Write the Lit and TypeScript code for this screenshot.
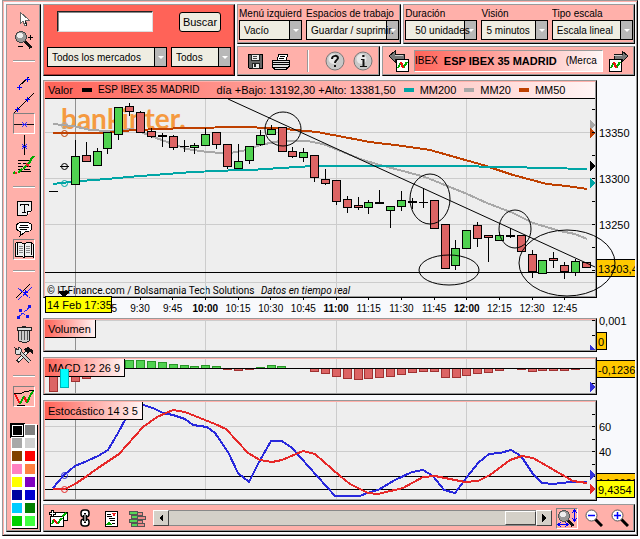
import { LitElement, html, svg, css } from "lit";
import { customElement, property } from "lit/decorators.js";

type Pt = [number, number];
const pts = (list: Pt[]) => list.map((p) => p.join(",")).join(" ");

/* ---------- market data, in chart units ---------- */

// centre x, wick top, body top, body bottom, wick bottom, kind (g up, r down, k flat)
const CANDLES: [number, number, number, number, number, string][] = [
  [75, 140, 156, 184, 184, "g"], [86, 142, 155, 161, 161, "r"], [97, 148, 151, 165, 165, "g"],
  [107, 132, 132, 148, 153, "g"], [118, 107, 107, 134, 139, "g"], [129, 103, 106, 111, 115, "r"],
  [140, 111, 112, 132, 132, "r"], [151, 128, 131, 136, 137, "r"], [162, 133, 135, 136, 146, "k"],
  [173, 135, 136, 147, 149, "r"], [184, 140, 146, 146, 151, "k"], [194, 143, 145, 147, 153, "g"],
  [205, 128, 134, 145, 145, "g"], [216, 132, 132, 144, 148, "r"], [227, 144, 144, 166, 168, "r"],
  [238, 144, 161, 168, 168, "g"], [249, 146, 146, 160, 163, "g"], [260, 130, 135, 144, 145, "g"],
  [271, 125, 129, 134, 134, "g"], [282, 127, 127, 151, 151, "r"], [292, 147, 151, 156, 157, "r"],
  [303, 148, 152, 157, 161, "g"], [314, 155, 155, 177, 181, "r"], [325, 169, 179, 183, 184, "r"],
  [336, 180, 180, 201, 204, "r"], [347, 196, 199, 207, 212, "r"], [358, 197, 205, 207, 209, "r"],
  [368, 200, 202, 207, 213, "g"], [379, 190, 202, 203, 203, "k"], [390, 206, 206, 210, 227, "g"],
  [401, 191, 200, 206, 210, "g"], [412, 198, 201, 202, 208, "k"], [423, 188, 202, 202, 207, "k"],
  [434, 200, 200, 228, 228, "r"], [445, 224, 224, 268, 268, "r"], [455, 240, 248, 265, 269, "g"],
  [466, 230, 230, 248, 248, "g"], [477, 222, 225, 238, 246, "r"], [488, 235, 235, 237, 261, "r"],
  [499, 232, 235, 240, 240, "g"], [510, 228, 235, 236, 237, "k"], [521, 235, 235, 251, 251, "r"],
  [532, 250, 254, 271, 277, "r"], [542, 260, 260, 273, 273, "g"], [553, 252, 258, 260, 267, "r"],
  [564, 262, 265, 271, 278, "r"], [575, 259, 261, 272, 275, "g"], [586, 262, 262, 267, 267, "r"],
];

const MM20: Pt[] = [[53, 124], [73, 126], [90, 130], [108, 131], [133, 129], [143, 133], [167, 142], [187, 149], [207, 152], [222, 153], [230, 153], [247, 150], [260, 145], [280, 141], [307, 141], [323, 144], [343, 152], [363, 160], [380, 165], [403, 171], [425, 177], [440, 183], [467, 194], [487, 203], [513, 213], [533, 223], [560, 231], [575, 234], [587, 239]];
const MM50: Pt[] = [[53, 133], [107, 133], [120, 131], [157, 129], [190, 128], [240, 127], [273, 128], [317, 132], [370, 142], [403, 146], [430, 150], [483, 165], [513, 175], [547, 184], [567, 186], [587, 189]];
const MM200: Pt[] = [[53, 184], [80, 181], [107, 179], [140, 176], [167, 174], [193, 172], [240, 170], [250, 170], [313, 166], [340, 166], [450, 166], [507, 167], [587, 169]];
const STO_K: Pt[] = [[53, 488], [64, 475], [75, 466], [87, 461], [98, 456], [108, 450], [118, 433], [126, 418], [134, 408], [143, 405], [153, 408], [163, 413], [173, 415], [185, 419], [193, 425], [207, 427], [215, 433], [228, 452], [238, 473], [249, 482], [258, 464], [271, 441], [282, 441], [292, 448], [335, 496], [360, 496], [367, 493], [378, 490], [395, 480], [412, 472], [423, 470], [433, 476], [444, 490], [455, 493], [467, 477], [478, 463], [489, 454], [500, 453], [511, 450], [521, 456], [533, 474], [542, 483], [553, 484], [570, 482], [587, 482]];
const STO_D: Pt[] = [[53, 489], [65, 489], [75, 484], [87, 476], [98, 468], [119, 454], [143, 427], [157, 417], [173, 410], [185, 412], [215, 424], [226, 429], [248, 453], [260, 460], [272, 462], [282, 460], [303, 451], [315, 454], [340, 476], [350, 484], [368, 493], [378, 494], [403, 488], [423, 477], [435, 476], [465, 482], [478, 481], [490, 475], [510, 460], [522, 456], [533, 458], [573, 481], [587, 483]];

// left x, far edge y, measured against the zero line
const MACD: Pt[] = [[49, 391], [71, 381], [82, 378], [125, 360], [136, 360], [147, 361], [158, 362], [169, 364], [180, 365], [190, 366], [201, 365], [212, 366], [223, 369], [234, 370], [245, 369], [256, 367], [267, 365], [277, 366], [310, 371], [321, 373], [332, 376], [343, 378], [354, 379], [364, 378], [375, 377], [386, 376], [397, 374], [408, 372], [419, 371], [430, 371], [441, 377], [452, 377], [462, 375], [473, 373], [484, 372], [495, 370], [517, 369], [528, 371], [538, 370], [549, 370], [560, 370], [571, 369]];

const TIMES = ["9:15", "9:30", "9:45", "10:00", "10:15", "10:30", "10:45", "11:00", "11:15", "11:30", "11:45", "12:00", "12:15", "12:30", "12:45"];

const arrow = (y: number, fill: string) => svg`<path d="M590 ${y - 5}v10l5-5z" fill=${fill}/>`;
const ring = (y: number, c: string) => svg`<circle class="smooth" cx="64.500" cy=${y + 0.5} r="3" fill="none" stroke=${c}/>`;
const verticals = (y1: number, y2: number) => svg`
  <rect x="75" y=${y1} width="1" height=${y2 - y1} fill="#909090"/>
  ${[205, 336, 466].map((x) => svg`<rect x=${x} y=${y1} width="1" height=${y2 - y1} fill="#ccc"/>`)}`;
const ticks = (ys: number[]) => ys.map((y) => svg`<rect x="592" y=${y} width="3" height="1"/>`);

/* ---------- icons ---------- */

const icon = (w: number, h: number, body: unknown) =>
  html`<svg width=${w} height=${h} viewBox="0 0 ${w} ${h}" aria-hidden="true">${body}</svg>`;
const cross = (x: number, y: number) => svg`<path d="M${x - 2} ${y + 0.5}h5M${x + 0.5} ${y - 2}v5" stroke="#00f"/>`;

const I = {
  cursor: icon(16, 18, svg`<path d="M4 2v12l3-3 2 5 2-1-2-5h4z" fill="#fff" stroke="#666"/><path d="M9 11l2 5" stroke="#222"/>`),
  zoom: icon(20, 20, svg`<path d="M10 10l7 8" stroke="#111" stroke-width="3"/><circle cx="7" cy="7" r="5.500" fill="#999" stroke="#444"/><circle cx="6" cy="5.500" r="3" fill="#eee"/><path d="M14 7.500h5M16.500 5v5M4 16.500h5" stroke="#000"/>`),
  segment: icon(20, 20, svg`<path d="M5 14L15 5" stroke="#000"/>${cross(5, 15)}${cross(13, 7)}`),
  line: icon(22, 20, svg`<path d="M1 20L21 0" stroke="#000"/>${cross(4, 16)}${cross(14, 6)}`),
  hline: icon(22, 20, svg`<path d="M0 10.500h22" stroke="#000"/><path d="M9 8l5 5M14 8l-5 5M9 10.500h5" stroke="#22f"/>`),
  vline: icon(20, 20, svg`<path d="M10.500 0v20" stroke="#000"/><path d="M8 9l5 5M13 9l-5 5M8 11.500h5" stroke="#22f"/>`),
  fib: icon(22, 20, svg`<path d="M5 4.500h13M5 7.500h3M10 7.500h5M5 10.500h5M12 10.500h6M5 13.500h4M11 13.500h6M5 15.500h13" stroke="#000"/><path d="M0 18l2-2M5 17l4-4M10 13l4-4M14 9l3-3 1-3 3-3" fill="none" stroke="#0a0" stroke-width="2"/><path d="M2 17h2M13 8l3 2" stroke="#e22" stroke-width="2"/>`),
  text: icon(16, 16, svg`<path d="M1 1h14v10l-4 4H1z" fill="#eee" stroke="#000"/><path d="M11 15v-4h4" fill="#fff" stroke="#000"/><path d="M4 6V4h8v2M8 4v8M6 12h4" fill="none" stroke="#000"/>`),
  bubble: icon(18, 16, svg`<path d="M9 1c5 0 8 2 8 5s-3 5-7 5l-5 4 1-4c-3-1-5-2-5-5s3-5 8-5z" fill="#fff" stroke="#000"/><path d="M5 4.500h8M4 6.500h10M5 8.500h7" stroke="#000"/>`),
  book: icon(20, 18, svg`<path d="M1 3l2-2 5 1 2 1 2-1 5-1 2 2v13l-7-1-2 2-2-2-7 1z" fill="#eee" stroke="#000"/><path d="M10 3v13M3 1v13M17 1v13" stroke="#000"/><path d="M4.500 5.500h4M4.500 7.500h4M4.500 9.500h4M4.500 11.500h4M12 5.500h4M12 7.500h4M12 9.500h4M12 11.500h4" stroke="#888"/>`),
  parallels: icon(20, 20, svg`<path d="M2 16L16 2" stroke="#000"/><path d="M4 18L18 5M4 6l12 10" stroke="#22f" stroke-dasharray="6 1"/>${cross(11, 10)}`),
  channel: icon(18, 18, svg`<path d="M3 13L15 3M5 6l8 8" stroke="#22f" stroke-dasharray="3 1"/><path d="M2 12h3v3H2zM13 1h3v3h-3zM4 5h3v3H4zM11 11h3v3h-3z" fill="#11e"/>`),
  trash: icon(16, 19, svg`<path d="M2 6l1 11 3 1h5l2-1 1-11z" fill="#ccc" stroke="#222"/><path d="M1 3h14v3H1z" fill="#ddd" stroke="#222"/><path d="M6 2h4" stroke="#222"/><path d="M5.500 7v9M8.500 7v9M11.500 7v9" stroke="#555"/>`),
  tools: icon(20, 18, svg`<path d="M3 16L13 6" stroke="#222" stroke-width="4"/><path d="M4 15L14 5" stroke="#eee" stroke-width="2"/><path d="M10 3l4-2 5 3v4l-3-2-3 1z" fill="#111"/><path d="M5 5l11 11" stroke="#222" stroke-width="4"/><path d="M5 5l11 11" stroke="#ccc" stroke-width="2"/><path d="M1 2l3 2 1-3 3 3-2 4-4 0z" fill="#ddd" stroke="#333"/>`),
  zigzag: icon(20, 18, svg`<path d="M0 5.500h7L10 4l10-2M3 17.500h8" fill="none" stroke="#000"/><path d="M1 6l5 10M10 8l3 7" stroke="#e11" stroke-width="2"/><path d="M6 16l4-8M13 15l3-7 3-5" stroke="#0a0" fill="none" stroke-width="2"/>`),
  save: icon(16, 16, svg`<path d="M1 1h14v14H2l-1-1z" fill="#666" stroke="#000"/><path d="M4 1h8v6H4zM5 10h7v5H5z" fill="#eee" stroke="#222"/><path d="M6 3.500h4M6 5.500h4" stroke="#444"/><path d="M7 11h2v3H7z" fill="#222"/>`),
  print: icon(20, 17, svg`<path d="M6 7l2-6h9l-2 6" fill="#fff" stroke="#000"/><path d="M9 3.500h5M8 5.500h5" stroke="#000"/><path d="M1 7.500h17v6l-3 3H4l-3-3z" fill="#ddd" stroke="#000"/><path d="M1 9.500h17M1 11.500h17M3 14.500h13" stroke="#000"/>`),
  help: icon(20, 20, svg`<g class="smooth"><circle cx="10" cy="10" r="9" fill="#c8c8c8" stroke="#777"/><circle cx="8.500" cy="8" r="5" fill="#e8e8e8"/><path d="M7 8c0-4 6-4 6-1 0 2-3 2-3 5M10 14v2" fill="none" stroke="#111" stroke-width="2"/></g>`),
  info: icon(20, 20, svg`<g class="smooth"><circle cx="10" cy="10" r="9" fill="#c8c8c8" stroke="#777"/><circle cx="8.500" cy="8" r="5" fill="#e8e8e8"/><path d="M10 4v2M8 8.500h3M7 15.500h7" stroke="#111"/><path d="M10.500 4v2M10.500 8v7" stroke="#111" stroke-width="2"/></g>`),
  prev: icon(22, 22, svg`<path d="M1 6l6-5v3h9v5H7v3z" fill="#777" stroke="#111"/><path d="M7 5.500h8" stroke="#ccc"/><path d="M8 9h12v12H8z" fill="#fff" stroke="#000"/><path d="M10 18l3-6M15 18l4-6" stroke="#0a0" stroke-width="2"/><path d="M13 12l2 6" stroke="#e11" stroke-width="2"/>`),
  next: icon(22, 22, svg`<path d="M21 6l-6-5v3H7v5h8v3z" fill="#777" stroke="#111"/><path d="M7 5.500h8" stroke="#ccc"/><path d="M2 9h12v12H2z" fill="#fff" stroke="#000"/><path d="M4 18l3-6M9 18l4-6" stroke="#0a0" stroke-width="2"/><path d="M7 12l2 6" stroke="#e11" stroke-width="2"/>`),
  addChart: icon(20, 18, svg`<path d="M8 3h11v8h-4v6H2V8" fill="#fff" stroke="#000"/><path d="M2 7h13v10H2z" fill="#fff" stroke="#000"/><path d="M4 15l2-5M9 15l5-6M14 8l4-4" stroke="#0a0" stroke-width="2"/><path d="M6 10l3 5" stroke="#e11" stroke-width="2"/><path d="M3 1h2v2h2v2H5v2H3V5H1V3h2z" fill="#fff" stroke="#000"/>`),
  chain: icon(12, 18, svg`<g class="smooth"><rect x="2" y="1" width="8" height="7" rx="3" fill="#fff" stroke="#000" stroke-width="1.500"/><rect x="2" y="10" width="8" height="7" rx="3" fill="#fff" stroke="#000" stroke-width="1.500"/><path d="M5 4h2v2H5zM5 12h2v2H5z"/><path d="M6 6v6" stroke="#000" stroke-width="4"/><path d="M6 5v8" stroke="#fff"/></g>`),
  report: icon(14, 17, svg`<path d="M1 1h12v15H1z" fill="#fff" stroke="#000"/><path d="M3 4.500h4M3 6.500h5M5 8.500h6M6 10.500h5M8 13.500h3" stroke="#000"/><path d="M8 3h4l-2 4z" fill="#e22"/><path d="M2 15l3-4 3 4z" fill="#0a0"/>`),
  levels: icon(18, 17, svg`<path d="M1 1h8v3H1zM3 5h6v3H3zM1 9h8v3H1zM3 13h6v3H3z" fill="#55d555" stroke="#555"/><path d="M9 2h5v3H9zM9 6h8v3H9zM9 10h5v3H9zM9 13h7v3H9z" fill="#e88" stroke="#555"/>`),
  fit: icon(20, 18, svg`<path d="M10 10l6 7" stroke="#111" stroke-width="3"/><circle cx="7" cy="7" r="5.500" fill="#999" stroke="#555"/><circle cx="6" cy="5.500" r="3" fill="#eee"/><path d="M17.500 2v9M15 4l2.500-3 2.500 3M15 9l2.500 3 2.500-3M2 15.500h8M4 13l-3 2.500 3 2.500M8 13l3 2.500-3 2.500" fill="none" stroke="#00f"/>`),
  minus: icon(18, 18, svg`<g class="smooth"><path d="M10 10l7 7" stroke="#000" stroke-width="3"/><circle cx="6.500" cy="6.500" r="5.500" fill="#fff" stroke="#555"/><path d="M3 6.500h7" stroke="#00f" stroke-width="1.500"/></g>`),
  plus: icon(18, 18, svg`<g class="smooth"><path d="M10 10l7 7" stroke="#000" stroke-width="3"/><circle cx="6.500" cy="6.500" r="5.500" fill="#fff" stroke="#555"/><path d="M3 6.500h7M6.500 3v7" stroke="#00f" stroke-width="1.500"/></g>`),
};

const TOOL_GROUPS: [string, unknown, boolean?][][] = [
  [["Puntero", I.cursor], ["Lupa", I.zoom]],
  [["Segmento", I.segment], ["Recta", I.line], ["Horizontal", I.hline, true], ["Vertical", I.vline], ["Fibonacci", I.fib]],
  [["Texto", I.text], ["Comentario", I.bubble], ["Libro", I.book, true]],
  [["Paralelas", I.parallels], ["Canal", I.channel], ["Borrar", I.trash], ["Herramientas", I.tools]],
  [["Zigzag", I.zigzag, true]],
];

const COLORS = ["#000", "#808080", "#a8a8a8", "#d0d0d0", "#804000", "#ff0000", "#ff80c0", "#ff8040", "#ffff00", "#8000c0", "#0000a0", "#0000d0", "#00ccff", "#008000", "#00d000", "#40ff40"];

const shared = css`
  :host { display: block; font: 10px/12px "Liberation Sans", Arial, sans-serif; color: #000; }
  * { box-sizing: border-box; }
  svg { display: block; shape-rendering: crispEdges; }
  .smooth { shape-rendering: geometricPrecision; }
  button, select, input { font: inherit; color: inherit; margin: 0; padding: 0; border-radius: 0; }
  button { border: 0; background: none; display: flex; align-items: center; justify-content: center; }
`;

@customElement("drop-down")
export class DropDown extends LitElement {
  @property() label = "";
  @property() value = "";
  @property({ type: Boolean }) hidelabel = false;
  @property({ type: Boolean }) indent = false;

  static styles = [shared, css`
    :host { min-width: 0; }
    label { display: block; height: 12px; overflow: hidden; white-space: nowrap; }
    .box { display: flex; position: relative; height: 20px; border: 1px solid #000; background: #efede2; }
    .box::before { content: ""; position: absolute; right: 0; top: 0; bottom: 0; width: 11px; background: #b8b8b8; border-left: 1px solid #000; }
    .box::after { content: ""; position: absolute; right: 2px; top: 8px; border: 3px solid transparent; border-top-color: #fff; }
    select { position: relative; z-index: 1; appearance: none; width: 100%; border: 0; background: transparent; padding: 2px 0 0 4px; outline: 0; text-overflow: clip; }
    .indent { padding-left: 9px; }
  `];

  render() {
    return html`
      ${this.hidelabel ? "" : html`<label for="s">${this.label}</label>`}
      <div class="box">
        <select id="s" class=${this.indent ? "indent" : ""} aria-label=${this.label}><option>${this.value}</option></select>
      </div>`;
  }
}

@customElement("app-root")
export class AppRoot extends LitElement {
  static styles = [shared, css`
    :host { background: #fff; }
    .frame {
      display: flex; gap: 2px; margin: 0 2px 3px; padding: 3px 2px 3px 3px;
      border: 1px solid; border-color: #999 #000 #000 #999; background: #f8f9fc;
      box-shadow: inset 1px 1px #ffb0aa, inset -1px -1px #999;
    }
    .panel { border: 1px solid; border-color: #999 #000 #000 #999; background: #ffb0aa; box-shadow: inset -1px -1px #999; }

    .tools { flex: 0 0 35px; display: flex; flex-direction: column; align-items: center; padding: 3px 0 0; }
    .tools button { width: 22px; height: 21px; }
    .pressed { border: 1px solid; border-color: #808080 #fff #fff #808080; }
    .sep { width: 22px; height: 2px; border: 0; margin: 10px 0 9px; background: linear-gradient(#999 50%, #fff 50%); }
    .palette { display: grid; grid-template-columns: 13px 13px; margin-top: 17px; background: #fff; box-shadow: 1px 1px #000; }
    .tools .swatch { width: 13px; height: 13px; border: 2px solid #fff; border-width: 1px 2px 2px 1px; }
    .tools .swatch.on { border: 1px solid #000; outline: 1px solid #000; box-shadow: inset 0 0 0 1px #fff; }

    .main { flex: 1; min-width: 0; display: flex; flex-direction: column; }
    .top { display: flex; gap: 2px; height: 72px; margin-bottom: 4px; }
    .search { flex: 0 0 192px; background: #ff6358; padding: 6px 3px 0; box-shadow: inset -1px -1px #a33; }
    .row { display: flex; }
    .search .find { padding: 0 10px; justify-content: space-between; align-items: center; margin-bottom: 15px; }
    .find input { width: 96px; height: 21px; border: 1px solid; border-color: #222 #ddd #ddd #222; box-shadow: inset 1px 1px #888; background: #fff; padding: 0 4px; outline: 0; }
    .find button { width: 42px; height: 20px; border: 1px solid #000; border-radius: 3px; background: #efede2; font-size: 11px; }
    .search .drops { gap: 4px; }
    .search drop-down { flex: 1; }
    .search drop-down:first-child { flex: 2; }
    .right { flex: 1; min-width: 0; display: flex; flex-direction: column; gap: 2px; }
    .right .row { gap: 2px; }
    .selects { display: flex; gap: 4px; height: 40px; padding: 3px 1px; }
    .menus { flex: 0 0 164px; }
    .menus drop-down:first-child { flex: 63; }
    .menus drop-down:last-child { flex: 93; }
    .scale { flex: 1; }
    .scale drop-down:nth-child(1) { flex: 73; }
    .scale drop-down:nth-child(2) { flex: 67; }
    .scale drop-down:nth-child(3) { flex: 82; }
    .actions { flex: 0 0 143px; height: 30px; display: flex; align-items: center; padding: 0 6px 0 9px; }
    .actions .print { margin-left: 8px; }
    .actions .bar { width: 2px; height: 22px; margin: 0 16px; background: linear-gradient(90deg, #999 50%, #fff 50%); }
    .actions .info { margin-left: 8px; }
    .ticker { flex: 1; min-width: 0; display: flex; align-items: center; justify-content: space-between; gap: 4px; padding: 0 5px; }
    .name { flex: 1; min-width: 0; height: 22px; display: flex; align-items: center; gap: 6px; overflow: hidden; white-space: nowrap; border: 1px solid; border-color: #999 #fff #fff #999; background: linear-gradient(90deg, #ff6358, #fff6f6); }
    .name b { font-size: 11px; margin-right: 3px; }

    .chart { display: grid; grid-template-columns: minmax(0, 1fr) 38px; }
    .plotbox { border: 1px solid; border-color: #999 #000 #000 #999; }
    .inner { display: grid; border: 1px solid; border-color: #ffb0aa #999 #999 #ffb0aa; background: #eee; }
    .header { display: flex; align-items: center; height: 17px; padding-left: 3px; white-space: nowrap; overflow: hidden; font-size: 11px; border-bottom: 1px solid #000; background: linear-gradient(90deg, #ff6358, #fff4f4); }
    .header i { width: 10px; height: 4px; margin-right: 6px; }
    .header span { flex: none; }
    .stock { font-size: 10px; }
    .k { background: #000; } .teal { background: #00a5a5; } .grey { background: #a8a8a8; } .rust { background: #bf4000; }
    .g1 { margin-right: 9px; } .g2 { margin-right: 17px; } .g3 { margin-right: 8px; }
    .canvas { display: grid; }
    .canvas > * { grid-area: 1 / 1; }
    .plot { width: 100%; overflow: visible; position: relative; z-index: 1; }
    .logo { align-self: start; font: 700 28px/28px Lato, sans-serif; color: #f59a40; padding: 5px 0 0 16px; }
    .credit { align-self: end; padding: 0 0 0 2px; font: 10px/11px Roboto, sans-serif; white-space: nowrap; }
    .credit em { margin-left: 4px; }
    .title { position: relative; z-index: 2; align-self: start; justify-self: start; height: 18px; padding: 3px 4px 0 3px; font-size: 11px; border: solid #000; border-width: 0 1px 1px 0; background: linear-gradient(90deg, #ff6358, #fff4f4); white-space: nowrap; }
    .over { z-index: 3; }

    .axis { position: relative; font-size: 11px; white-space: nowrap; }
    .axis div { padding-left: 2px; }
    .axis .lvl { height: 46px; }
    .prices { padding-top: 47px; }
    .axis .tag { position: absolute; left: 0; width: 38px; height: 18px; overflow: hidden; border: 1px solid #000; border-width: 1px 0; padding: 3px 0 0 1px; background: #ffc800; }
    .axis .last { top: 179px; }
    .axis .top-lvl { margin-top: -3px; }
    .axis .vol { top: 14px; width: 10px; border-width: 1px 1px 1px 0; }
    .axis .mac { top: 3px; }
    .axis .k-tag { top: 73px; }
    .axis .d-tag { top: 80px; height: 18px; background: #ff0; border-width: 1px 1px 1px 0; }
    .sto { padding-top: 21px; }
    .sto .lvl { height: 25px; }

    .times { display: flex; position: relative; height: 20px; margin-right: 38px; padding: 0 16px 0 48px; }
    .times span { flex: 1 1 0; width: 0; display: flex; flex-direction: column; align-items: center; }
    .times span::before { content: ""; width: 1px; height: 2px; background: #000; margin-bottom: 3px; }
    .hour { font-weight: 700; }
    .times .now { position: absolute; z-index: 2; left: 2px; top: -2px; width: 67px; height: 17px; padding: 2px 0 0 1px; border: 1px solid #000; background: #ff0; font-size: 11px; white-space: nowrap; }
    .gap { margin-bottom: 5px; }
    .low { margin-bottom: 3px; }

    .bottom { display: flex; align-items: center; height: 28px; padding: 0 5px 0 4px; }
    .bottom .chain { margin-left: 11px; }
    .bottom .report { margin-left: 13px; }
    .bottom .levels { margin-left: 10px; }
    .scroll { flex: 1; min-width: 0; display: flex; height: 16px; margin: 0 4px 0 7px; background: #d4d0c8; }
    .scroll button { flex: 0 0 16px; background: #d4d0c8; border: 1px solid; border-color: #fff #444 #444 #fff; }
    .scroll input { flex: 1; min-width: 0; appearance: none; height: 16px; background: #d4d0c8; border: solid #888; border-width: 1px 0; }
    .scroll input::-webkit-slider-thumb { appearance: none; width: 31px; height: 14px; background: #d4d0c8; border: 1px solid; border-color: #fff #444 #444 #fff; }
    .bottom .fit { width: 22px; height: 21px; margin-right: 7px; }
    .bottom .minus { margin-right: 8px; }
  `];

  private plot(y: number, h: number, body: unknown, over = false) {
    return html`<svg class="plot ${over ? "over" : ""}" height=${h} viewBox="45 ${y} 550 ${h}" preserveAspectRatio="none">${body}</svg>`;
  }

  private price() {
    return this.plot(99, 197, svg`
      ${[132, 178, 224, 282].map((y) => svg`<rect x="45" y=${y} width="550" height="1" fill="#ccc"/>`)}
      ${verticals(99, 296)}
      <g fill="none" stroke-width="2">
        <polyline points=${pts(MM20)} stroke="#a8a8a8"/>
        <polyline points=${pts(MM50)} stroke="#bf4000"/>
        <polyline points=${pts(MM200)} stroke="#00a5a5"/>
      </g>
      <rect x="45" y="272" width="550" height="1"/>
      <rect x="49" y="191" width="9" height="1"/>
      ${CANDLES.map(([x, hi, a, b, lo, kind]) => svg`
        <rect x=${x} y=${hi} width="1" height=${lo - hi + 1}/>
        ${kind === "k"
          ? svg`<rect x=${x - 4} y=${a} width="9" height=${b - a + 1}/>`
          : svg`<rect x=${x - 4} y=${a} width="9" height=${b - a + 1}/><rect x=${x - 3} y=${a + 1} width="7" height=${b - a - 1} fill=${kind === "g" ? "#50d250" : "#dc6464"}/>`}`)}
      ${ring(125, "#a8a8a8")}${ring(133, "#bf4000")}${ring(166, "#000")}${ring(183, "#00a5a5")}
      <rect x="60" y="166" width="9" height="1"/>
      <path d="M59 291h10v2l-5 4-5-4z"/>
      ${arrow(125, "#a8a8a8")}${arrow(133, "#bf4000")}${arrow(166, "#000")}${arrow(183, "#00a5a5")}
      ${ticks([109, 132, 155, 178, 201, 224, 247, 270])}
      <g class="smooth" fill="none" stroke="#000">
        <path d="M228 99L595 267"/>
        <ellipse cx="283" cy="129" rx="18" ry="17"/>
        <ellipse cx="430" cy="199" rx="20" ry="25"/>
        <ellipse cx="449" cy="270" rx="30" ry="15"/>
        <ellipse cx="515" cy="229" rx="16" ry="19"/>
        <ellipse cx="567" cy="263" rx="48" ry="33"/>
      </g>`);
  }

  private macd() {
    return this.plot(359, 34, svg`
      ${MACD.map(([x, y]) => y > 368
        ? svg`<rect x=${x} y="368" width="9" height=${y - 367} fill="#a03232"/><rect x=${x + 1} y="369" width="7" height=${Math.max(0, y - 369)} fill="#dc6464"/>`
        : svg`<rect x=${x} y=${y} width="9" height=${369 - y} fill="#289628"/><rect x=${x + 1} y=${y + 1} width="7" height=${Math.max(0, 367 - y)} fill="#50d250"/>`)}
      <rect x="45" y="368" width="550" height="1"/>
      ${ticks([383])}${arrow(387, "#3232dc")}`);
  }

  render() {
    return html`
      <div class="frame">
        <nav class="tools panel" aria-label="Dibujo">
          ${TOOL_GROUPS.map((group, i) => html`
            ${i ? html`<hr class="sep" />` : ""}
            ${group.map(([name, pic, on]) => html`<button class=${on ? "pressed" : ""} aria-label=${name}>${pic}</button>`)}`)}
          <div class="palette">
            ${COLORS.map((c, i) => html`<button class="swatch ${i ? "" : "on"}" aria-label="Color ${c}" style="background:${c}"></button>`)}
          </div>
        </nav>

        <main class="main">
          <div class="top">
            <form class="search panel" @submit=${(e: Event) => e.preventDefault()}>
              <div class="row find"><input type="text" aria-label="Buscar valor" /><button>Buscar</button></div>
              <div class="row drops">
                <drop-down hidelabel label="Mercado" value="Todos los mercados"></drop-down>
                <drop-down hidelabel label="Tipo" value="Todos"></drop-down>
              </div>
            </form>
            <div class="right">
              <div class="row">
                <div class="selects menus panel">
                  <drop-down label="Menú izquierdo" value="Vacío"></drop-down>
                  <drop-down label="Espacios de trabajo" value="Guardar / suprimir."></drop-down>
                </div>
                <div class="selects scale panel">
                  <drop-down label="Duración" value="50 unidades" indent></drop-down>
                  <drop-down label="Visión" value="5 minutos"></drop-down>
                  <drop-down label="Tipo escala" value="Escala lineal"></drop-down>
                </div>
              </div>
              <div class="row">
                <div class="actions panel">
                  <button aria-label="Guardar">${I.save}</button>
                  <button class="print" aria-label="Imprimir">${I.print}</button>
                  <div class="bar"></div>
                  <button aria-label="Ayuda">${I.help}</button>
                  <button class="info" aria-label="Información">${I.info}</button>
                </div>
                <div class="ticker panel">
                  <button aria-label="Anterior">${I.prev}</button>
                  <div class="name"><span>IBEX</span><b>ESP IBEX 35 MADRID</b><span>(Merca</span></div>
                  <button aria-label="Siguiente">${I.next}</button>
                </div>
              </div>
            </div>
          </div>

          <section class="chart">
            <div class="plotbox"><div class="inner">
              <div class="header">
                <span class="g1">Valor</span>
                <i class="k"></i><span class="g2 stock">ESP IBEX 35 MADRID</span>
                <span class="g3">día +Bajo: 13192,30 +Alto: 13381,50</span>
                <i class="teal"></i><span class="g3">MM200</span>
                <i class="grey"></i><span class="g3">MM20</span>
                <i class="rust"></i><span>MM50</span>
              </div>
              <div class="canvas">
                <div class="logo">bankinter.</div>
                ${this.price()}
                <div class="credit">© IT-Finance.com / Bolsamania Tech Solutions <em>Datos en tiempo real</em></div>
              </div>
            </div></div>
            <div class="axis prices">
              <div class="lvl">13350</div><div class="lvl">13300</div><div class="lvl">13250</div>
              <div class="tag last">13203,4</div>
            </div>
          </section>

          <div class="times">
            ${TIMES.map((t) => html`<span class=${t.endsWith(":00") ? "hour" : ""}>${t}</span>`)}
            <div class="now">14 Feb 17:35</div>
          </div>

          <section class="chart gap">
            <div class="plotbox"><div class="inner"><div class="canvas">
              ${this.plot(320, 30, svg`${verticals(320, 350)}<rect x="45" y="320" width="550" height="1" fill="#ccc"/>${ticks([320, 335])}<path d="M590 345v5h5z" fill="#3232dc"/>`)}
              <div class="title">Volumen</div>
            </div></div></div>
            <div class="axis"><div class="top-lvl">0,001</div><div class="tag vol">0</div></div>
          </section>

          <section class="chart gap">
            <div class="plotbox"><div class="inner"><div class="canvas">
              ${this.plot(359, 34, verticals(359, 393))}
              ${this.macd()}
              <div class="title">MACD 12 26 9</div>
              ${this.plot(359, 34, svg`<rect x="60" y="369" width="9" height="19" fill="#00b4b4"/><rect x="61" y="369" width="7" height="18" fill="#0ff"/>`, true)}
            </div></div></div>
            <div class="axis"><div class="tag mac">-0,1236</div></div>
          </section>

          <section class="chart low">
            <div class="plotbox"><div class="inner"><div class="canvas">
              ${this.plot(402, 97, svg`
                ${[426, 451].map((y) => svg`<rect x="45" y=${y} width="550" height="1" fill="#ccc"/>`)}
                ${verticals(402, 499)}
                <rect x="45" y="476" width="550" height="1"/><rect x="45" y="489" width="550" height="1"/>
                <g fill="none" stroke-width="2">
                  <polyline points=${pts(STO_K)} stroke="#2828dc"/>
                  <polyline points=${pts(STO_D)} stroke="#e62828"/>
                </g>
                ${ring(475, "#2828dc")}${ring(489, "#e62828")}
                ${ticks([414, 426, 439, 451, 464])}${arrow(475, "#3232dc")}${arrow(489, "#e62828")}`)}
              <div class="title">Estocástico 14 3 5</div>
            </div></div></div>
            <div class="axis sto">
              <div class="lvl">60</div><div class="lvl">40</div>
              <div class="tag k-tag">14,2020</div><div class="tag d-tag">9,4354</div>
            </div>
          </section>

          <div class="bottom panel">
            <button aria-label="Añadir gráfico">${I.addChart}</button>
            <button class="chain" aria-label="Enlazar">${I.chain}</button>
            <button class="report" aria-label="Informe">${I.report}</button>
            <button class="levels" aria-label="Niveles">${I.levels}</button>
            <div class="scroll">
              <button aria-label="Desplazar a la izquierda">${icon(8, 8, svg`<path d="M6 0v8L2 4z"/>`)}</button>
              <input type="range" min="0" max="100" value="100" aria-label="Desplazamiento" />
              <button aria-label="Desplazar a la derecha">${icon(8, 8, svg`<path d="M2 0v8l4-4z"/>`)}</button>
            </div>
            <button class="fit pressed" aria-label="Ajustar">${I.fit}</button>
            <button class="minus" aria-label="Alejar">${I.minus}</button>
            <button aria-label="Acercar">${I.plus}</button>
          </div>
        </main>
      </div>`;
  }
}
